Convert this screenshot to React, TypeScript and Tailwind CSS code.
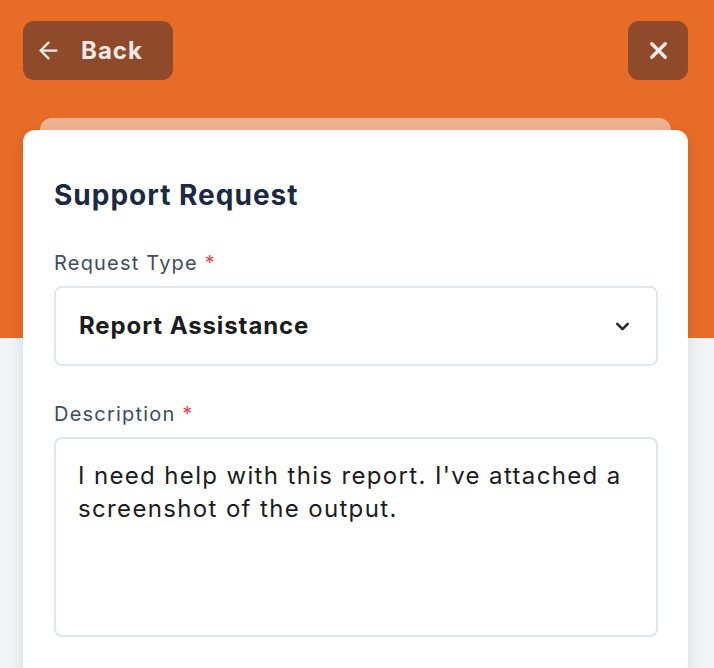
import React from "react";
import { ArrowLeft, X, ChevronDown } from "lucide-react";

export default function App() {
  return (
    <div
      className="relative min-h-[668px] w-full overflow-hidden bg-[#f1f3f6]"
      style={{ fontFamily: "Inter, 'Noto Sans', sans-serif" }}
    >
      {/* Orange header band */}
      <div className="absolute inset-x-0 top-0 h-[338px] bg-[#e76c27]"></div>

      <div className="relative pl-[23px] pr-[26px] pt-[21px]">
        <div className="flex items-center justify-between">
          <button className="flex h-[59px] w-[150px] items-center gap-[19px] rounded-[11px] bg-[#8f4a2b] pl-[12px] text-[24px] font-bold tracking-[1px] text-[#f5ebe6]">
            <ArrowLeft size={27} strokeWidth={2} />
            Back
          </button>
          <button className="flex h-[59px] w-[60px] items-center justify-center rounded-[11px] bg-[#8f4a2b] text-[#f5ebe6]">
            <X size={27} strokeWidth={3} />
          </button>
        </div>

        {/* Stacked card */}
        <div className="mx-[17px] mt-[38px] h-[16px] rounded-t-[12px] bg-[#eeb292]"></div>
        <div className="-mt-[4px] rounded-[12px] bg-white pb-10 pl-[31px] pr-[30px] pt-[49px] shadow-[0_4px_14px_rgba(30,40,60,0.12)]">
          <h1 className="text-[28px] font-bold leading-[32px] tracking-[1px] text-[#1b2942]">
            Support Request
          </h1>

          <label className="mt-[40px] block text-[20px] leading-[24px] tracking-[1.2px] text-[#3f4d60]">
            Request Type <span className="text-[#e5484d]">*</span>
          </label>
          <div className="mt-[11px] flex h-[80px] items-center justify-between rounded-[8px] border-2 border-[#e1e6ec] pl-[23px] pr-[23px]">
            <span className="text-[24px] font-bold tracking-[0.9px] text-[#1c1c1c]">
              Report Assistance
            </span>
            <ChevronDown size={21} strokeWidth={3} className="text-[#2a2a2a]" />
          </div>

          <label className="mt-[36px] block text-[20px] leading-[24px] tracking-[1.2px] text-[#3f4d60]">
            Description <span className="text-[#e5484d]">*</span>
          </label>
          <div className="mt-[11px] h-[200px] rounded-[8px] border-2 border-[#e1e6ec] pl-[22px] pr-[18px] pt-[20px]">
            <p className="text-[24px] leading-[33px] tracking-[1.35px] text-[#1c1c1c]">
              I need help with this report. I've attached a screenshot of the
              output.
            </p>
          </div>
        </div>
      </div>
    </div>
  );
}
